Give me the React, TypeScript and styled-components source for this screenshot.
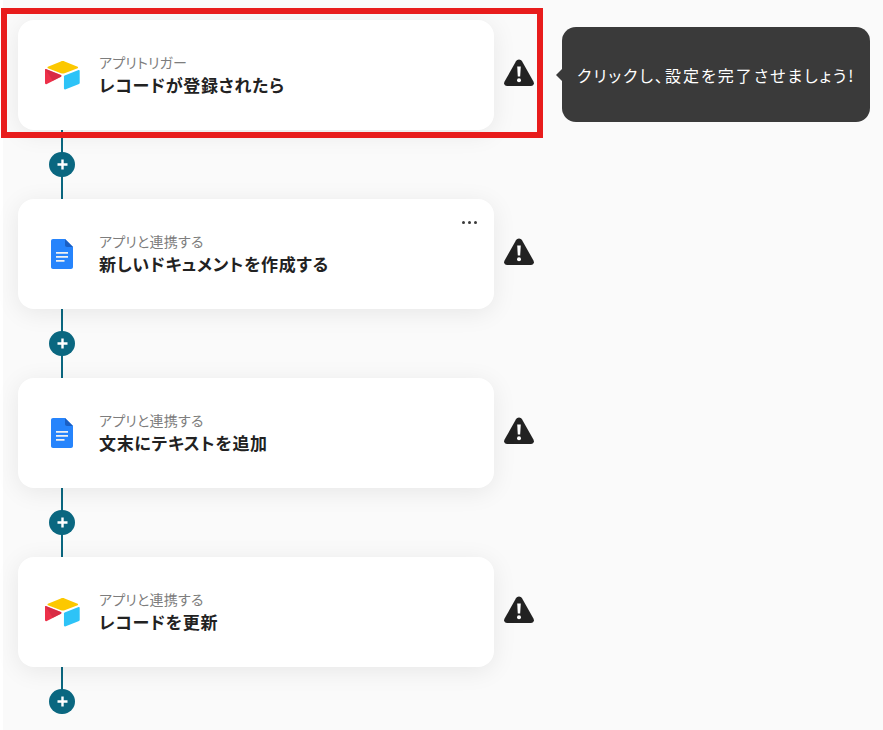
import React from "react";
import styled, { createGlobalStyle } from "styled-components";

const Global = createGlobalStyle`
  html, body { margin: 0; padding: 0; background: #fff; }
  body { font-family: "Noto Sans CJK JP", "Noto Sans", sans-serif; }
`;

const Page = styled.div`
  position: relative;
  width: 883px;
  height: 730px;
  overflow: hidden;
  box-sizing: border-box;
  padding: 20px 0 0 18px;
  background: linear-gradient(90deg, #fff 3px, #fafafa 3px);
`;

const Step = styled.div`
  display: flex;
  align-items: center;
  gap: 9px;
  height: 109.5px;
`;

const Card = styled.div`
  position: relative;
  box-sizing: border-box;
  width: 476px;
  height: 109.5px;
  padding-left: 26px;
  display: flex;
  align-items: center;
  gap: 19px;
  background: #fff;
  border-radius: 16px;
  box-shadow: 0 4px 24px rgba(0, 0, 0, 0.08);
`;

const Logo = styled.div`
  width: 36px;
  height: 36px;
  display: flex;
  align-items: center;
  justify-content: center;
  flex: none;
`;

const Texts = styled.div`
  display: flex;
  flex-direction: column;
  margin-top: 1px;
`;

const Sub = styled.div`
  font-size: 14px;
  line-height: 19px;
  letter-spacing: 0.2px;
  color: #7d7d7d;
  font-feature-settings: "palt";
`;

const Title = styled.div`
  font-size: 17px;
  line-height: 25px;
  letter-spacing: 0.7px;
  font-weight: 700;
  color: #222;
  font-feature-settings: "palt";
`;

const More = styled.div`
  position: absolute;
  right: 17px;
  top: 22px;
  display: flex;
  gap: 3px;
  & > i {
    width: 3px;
    height: 3px;
    border-radius: 50%;
    background: #3a3a3a;
  }
`;

const Connector = styled.div<{ $last?: boolean }>`
  width: 50px;
  height: 69.5px;
  margin-left: 19px;
  display: flex;
  align-items: center;
  justify-content: center;
  background: linear-gradient(#0a6780, #0a6780) center top / 2px ${(p) => (p.$last ? "50%" : "100%")} no-repeat;
`;

const Plus = styled.div`
  width: 25.5px;
  height: 25.5px;
  border-radius: 50%;
  background: #0a6780;
  display: flex;
  align-items: center;
  justify-content: center;
`;

const Tooltip = styled.div`
  position: absolute;
  left: 562px;
  top: 27px;
  width: 308px;
  height: 95px;
  box-sizing: border-box;
  display: flex;
  align-items: center;
  padding-left: 15px;
  background: #3a3a3a;
  border-radius: 14px;
  color: #fff;
  font-size: 16px;
  letter-spacing: 2px;
  white-space: nowrap;
  font-feature-settings: "palt";
  &::before {
    content: "";
    position: absolute;
    left: -6px;
    top: 42px;
    width: 0;
    height: 0;
    border-style: solid;
    border-width: 6px 6px 6px 0;
    border-color: transparent #3a3a3a transparent transparent;
  }
`;

const Highlight = styled.div`
  position: absolute;
  left: 1px;
  top: 8px;
  width: 542px;
  height: 130px;
  box-sizing: border-box;
  border: 6px solid #e81c1c;
  pointer-events: none;
`;

const WarningIcon = styled.svg`
  flex: none;
  margin-bottom: 4px;
`;

const AirtableIcon = styled.svg`
  margin-top: 1px;
`;

const Warning = () => (
  <WarningIcon width="32" height="30" viewBox="0 0 32 30">
    <path
      d="M16 1.5 C17.3 1.5 18.3 2.2 19 3.3 L30.4 23.4 C31.7 25.7 30.3 28 27.8 28 L4.2 28 C1.7 28 0.3 25.7 1.6 23.4 L13 3.3 C13.7 2.2 14.7 1.5 16 1.5 Z"
      fill="#222"
    />
    <path d="M14.2 8.5 h3.6 l-.6 10 h-2.4 z" fill="#fff" />
    <circle cx="16" cy="22.3" r="2" fill="#fff" />
  </WarningIcon>
);

const Airtable = () => (
  <AirtableIcon width="35" height="30" viewBox="0 0 36 30">
    <path d="M16.3 1 L3 6.6 C2.4 6.9 2.4 7.7 3 8 L16.4 13.2 C17.6 13.7 19 13.7 20.2 13.2 L33.6 8 C34.2 7.7 34.2 6.9 33.6 6.6 L20.2 1 C19 .5 17.5 .5 16.3 1 Z" fill="#fcc800" />
    <path d="M19.5 16.5 V29 C19.5 29.6 20.1 30 20.7 29.8 L35 24.2 C35.4 24 35.7 23.7 35.7 23.2 V10.7 C35.7 10.1 35.1 9.7 34.5 9.9 L20.2 15.5 C19.8 15.7 19.5 16 19.5 16.5 Z" fill="#2dc3f7" />
    <path d="M16.5 16.7 L1.4 24.4 C.8 24.7 0 24.3 0 23.6 V9.6 C0 9.3 .2 9.1 .4 8.9 C.5 8.8 .7 8.8 .9 8.8 L16.4 15 C17 15.3 17 16.3 16.5 16.7 Z" fill="#ed3049" />
    <path d="M16.5 16.7 L8 21 L.4 8.9 C.5 8.8 .7 8.8 .9 8.8 L16.4 15 C17 15.3 17 16.3 16.5 16.7 Z" fill="#c62842" opacity=".55" />
  </AirtableIcon>
);

const Docs = () => (
  <svg width="22" height="30" viewBox="0 0 22 30">
    <path d="M14 0 H2 C.9 0 0 .9 0 2 V28 C0 29.1 .9 30 2 30 H20 C21.1 30 22 29.1 22 28 V8 L14 0 Z" fill="#2684fc" />
    <path d="M14 0 L22 8 H16 C14.9 8 14 7.1 14 6 V0 Z" fill="#1a5fc4" />
    <path d="M5 13 H17 V14.8 H5 Z M5 17 H17 V18.8 H5 Z M5 21 H13.5 V22.8 H5 Z" fill="#f1f1f1" />
  </svg>
);

const steps = [
  { logo: <Airtable />, sub: "アプリトリガー", title: "レコードが登録されたら", more: false },
  { logo: <Docs />, sub: "アプリと連携する", title: "新しいドキュメントを作成する", more: true },
  { logo: <Docs />, sub: "アプリと連携する", title: "文末にテキストを追加", more: false },
  { logo: <Airtable />, sub: "アプリと連携する", title: "レコードを更新", more: false },
];

export default function App() {
  return (
    <Page>
      <Global />
      {steps.map((s, i) => (
        <React.Fragment key={s.title + s.sub}>
          <Step>
            <Card>
              <Logo>{s.logo}</Logo>
              <Texts>
                <Sub>{s.sub}</Sub>
                <Title>{s.title}</Title>
              </Texts>
              {s.more && (
                <More>
                  <i />
                  <i />
                  <i />
                </More>
              )}
            </Card>
            <Warning />
          </Step>
          <Connector $last={i === steps.length - 1}>
            <Plus>
              <svg width="13" height="13" viewBox="0 0 13 13">
                <path d="M5.3 1.5 h2.4 v3.8 h3.8 v2.4 h-3.8 v3.8 h-2.4 v-3.8 h-3.8 v-2.4 h3.8 z" fill="#fff" />
              </svg>
            </Plus>
          </Connector>
        </React.Fragment>
      ))}
      <Tooltip>クリックし、設定を完了させましょう!</Tooltip>
      <Highlight />
    </Page>
  );
}
